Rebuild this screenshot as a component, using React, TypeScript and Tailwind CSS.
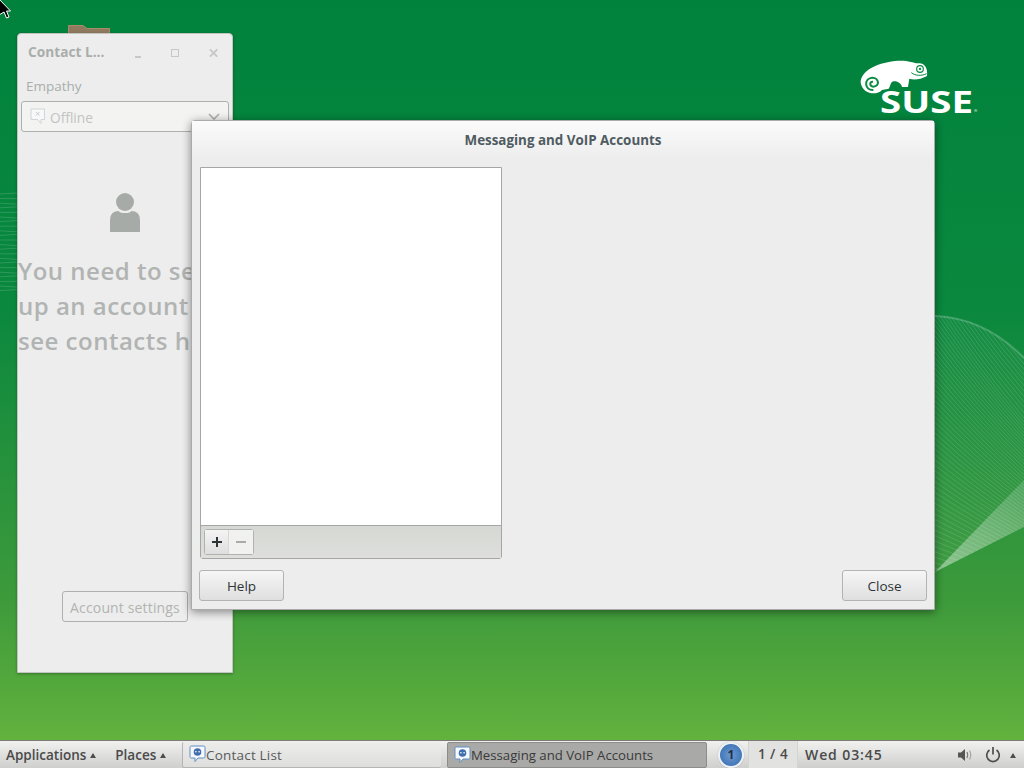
import React from 'react'

const FONT = "font-['Open_Sans','Noto_Sans',sans-serif]"

// family of fine lines for the right hand wave, clipped to its outline
function wavePaths() {
  const lines: string[] = []
  for (let y0 = 190; y0 < 572; y0 += 5.4) {
    const t = Math.min(1, Math.max(0, (y0 - 300) / 270))
    const slope = 1.45 - 1.15 * t
    const midY = y0 + slope * 45 * 1.05
    const endY = y0 + slope * 89 * 0.93
    lines.push(`M935 ${y0} Q980 ${midY} 1024 ${endY}`)
  }
  return lines
}

function leftWavePaths() {
  const left: string[] = []
  for (let i = 0; i < 22; i++) {
    const y = 194 + i * 4.6
    left.push(`M0 ${y} L17 ${y - 1 + (i % 3)}`)
  }
  return left
}

function Wallpaper() {
  return (
    <svg className="absolute inset-0" width={1024} height={768}>
      <defs>
        <clipPath id="wave-clip">
          <path d="M935 315 Q985 318 1024 358 L1024 527 L935 572 Z" />
        </clipPath>
        <linearGradient id="ribbon" x1="0" y1="1" x2="1" y2="0">
          <stop offset="0" stopColor="#ffffff" stopOpacity="0.42" />
          <stop offset="1" stopColor="#ffffff" stopOpacity="0.14" />
        </linearGradient>
      </defs>
      <path d="M935 315 Q985 318 1024 358 L1024 527 L935 572 Z" fill="#ffffff" fillOpacity="0.04" />
      <g clipPath="url(#wave-clip)">
        {wavePaths().map((d, i) => (
          <path key={i} d={d} fill="none" stroke="#ffffff" strokeOpacity="0.17" strokeWidth="0.8" />
        ))}
      </g>
      <path d="M935 316 Q985 318 1024 358" fill="none" stroke="#ffffff" strokeOpacity="0.2" strokeWidth="2" />
      <path d="M935 572 L1024 480 L1024 527 Z" fill="url(#ribbon)" />
      {leftWavePaths().map((d, i) => (
        <path key={i} d={d} fill="none" stroke="#ffffff" strokeOpacity="0.22" strokeWidth="0.7" />
      ))}
    </svg>
  )
}

function SuseLogo() {
  return (
    <div className="absolute left-[840px] top-[40px] h-[100px] w-[184px]">
      <svg className="absolute inset-0" width={184} height={100} viewBox="0 0 552 300">
        <path
          d="M62 128 C62 95 105 70 165 63 C200 59 218 68 232 70 C254 66 264 85 261 108 C240 120 220 120 208 116 L204 141 L186 141 C184 130 172 122 160 124 C150 128 152 138 146 146 L126 150 C112 166 70 166 62 128 Z"
          fill="#ffffff"
        />
        <path d="M100 150 C74 152 70 116 96 113 C118 112 120 140 100 140 C88 139 88 124 99 125" fill="none" stroke="#0b8a43" strokeWidth="6" />
        <circle cx="240" cy="87" r="10" fill="none" stroke="#0b8a43" strokeWidth="3.5" />
        <circle cx="240" cy="87" r="3.5" fill="#0b8a43" />
        <path d="M214 98 C226 108 246 108 260 101" fill="none" stroke="#0b8a43" strokeWidth="3" />
      </svg>
      <span className="absolute left-[40px] top-[42px] origin-left scale-x-[1.24] text-[31px] leading-[38px] font-bold text-white font-['Open_Sans',sans-serif]">
        SUSE
      </span>
      <span className="absolute left-[134px] top-[69px] text-[4px] leading-[4px] text-white">®</span>
    </div>
  )
}

function ChatFaceIcon() {
  return (
    <svg width="17" height="18" viewBox="0 0 17 18" className="shrink-0">
      <path d="M2.5 1 H14.5 Q16 1 16 2.5 V11.5 Q16 13 14.5 13 H9 L6 16.5 V13 H2.5 Q1 13 1 11.5 V2.5 Q1 1 2.5 1 Z" fill="#f6f8fb" stroke="#5f8fc4" />
      <circle cx="8.5" cy="7" r="3.8" fill="#3f6fae" />
      <rect x="6.2" y="6" width="1.4" height="1.4" fill="#e8eef6" />
      <rect x="9.4" y="6" width="1.4" height="1.4" fill="#e8eef6" />
    </svg>
  )
}

function UpArrow() {
  return <span className="mt-[2px] h-0 w-0 border-x-[3.5px] border-b-[5px] border-x-transparent border-b-[#4d4d4d]" />
}

function Taskbar() {
  return (
    <div className={`absolute bottom-0 left-0 flex h-[28px] w-[1024px] items-center border-t border-[#7b7b78] bg-gradient-to-b from-[#f1f1f0] to-[#cfcfcd] text-[13.5px] text-[#4a4a4a] ${FONT}`}>
      <div className="flex w-[182px] shrink-0 items-center pl-[6px] font-semibold">
        <span className="pt-[2px]">Applications</span>
        <span className="ml-[4px] mr-[19px] flex"><UpArrow /></span>
        <span className="pt-[2px]">Places</span>
        <span className="ml-[4px] flex"><UpArrow /></span>
      </div>
      <div className="flex h-[26px] w-[259px] shrink-0 items-center rounded-[2px] border-b border-l border-[#b5b5b3] bg-gradient-to-b from-[#ececeb] to-[#dededc] pl-[6px] text-[#5a5a5a]">
        <ChatFaceIcon />
        <span className="pt-[2px] tracking-[0.2px]">Contact List</span>
      </div>
      <div className="ml-[6px] flex h-[26px] w-[260px] shrink-0 items-center rounded-[2px] border border-[#8c8c8a] bg-[#a9a9a7] pl-[6px] text-[13.2px] text-[#3a3a3a]">
        <ChatFaceIcon />
        <span className="pt-[2px]">Messaging and VoIP Accounts</span>
      </div>
      <div className="ml-[11px] flex h-[26px] w-[26px] shrink-0 items-center justify-center rounded-full border-[2px] border-[#eef1f4] bg-[radial-gradient(circle,#6f9ad0,#2f68ae)] text-[12px] font-bold text-[#1f2f45] shadow-[0_0_1px_rgba(0,0,0,0.4)]">
        1
      </div>
      <div className="ml-[4px] flex h-[27px] w-[50px] shrink-0 items-center justify-center border-x border-[#d4d4d2] bg-[#e2e2e0] font-semibold tracking-[0.5px]">
        1 / 4
      </div>
      <span className="ml-[7px] w-[152px] shrink-0 text-[14px] font-semibold tracking-[0.9px]">Wed 03:45</span>
      <svg width="16" height="16" viewBox="0 0 16 16" className="shrink-0">
        <path d="M1 5.5 H4 L8 2 V14 L4 10.5 H1 Z" fill="#555555" />
        <path d="M10 5 Q11.5 8 10 11" fill="none" stroke="#777777" strokeWidth="1.2" />
        <path d="M12.5 3.5 Q15 8 12.5 12.5" fill="none" stroke="#a5a5a5" strokeWidth="1.2" />
      </svg>
      <svg width="16" height="17" viewBox="0 0 16 17" className="ml-[12px] shrink-0">
        <path d="M4.5 4 A6.3 6.3 0 1 0 11.5 4" fill="none" stroke="#4d4d4d" strokeWidth="1.7" />
        <path d="M8 1 V8.5" fill="none" stroke="#4d4d4d" strokeWidth="1.7" />
      </svg>
      <span className="ml-[9px] flex"><UpArrow /></span>
    </div>
  )
}

function ContactListWindow() {
  return (
    <div className={`absolute left-[17px] top-[33px] flex h-[640px] w-[216px] flex-col rounded-t-[4px] border border-[#c2c4c2] bg-[#ededed] shadow-[0_1px_3px_rgba(0,0,0,0.3)] ${FONT}`}>
      <div className="flex h-[38px] shrink-0 items-center pb-[1px] pl-[10px] pr-[14px] text-[13.7px] font-bold text-[#a9adab]">
        <span className="w-[108px]">Contact L...</span>
        <span className="ml-[7px] mt-[9px] h-[1.5px] w-[7px] bg-[#c6c8c6]" />
        <span className="ml-[30px] h-[8px] w-[8px] border-[1.5px] border-[#c6c8c6]" />
        <svg width="10" height="10" viewBox="0 0 10 10" className="ml-[30px]">
          <path d="M1 1 L9 9 M9 1 L1 9" stroke="#c6c8c6" strokeWidth="2" />
        </svg>
      </div>
      <div className="mt-[4px] pl-[8px] text-[13.5px] leading-[20px] text-[#a9adab]">Empathy</div>
      <div className="mx-[3px] mt-[5px] flex h-[31px] shrink-0 items-center rounded-[3px] border border-[#aeb0ae] bg-[#f3f3f2] pl-[8px] pr-[8px] text-[13.7px] text-[#c2c4c2]">
        <svg width="16" height="17" viewBox="0 0 16 17" className="shrink-0">
          <path d="M1 1 H14.5 V11.5 H11 V15.5 L7.5 11.5 H1 Z" fill="#f8f8f8" stroke="#cfd5d8" />
          <path d="M6 4 L9.5 7.5 M9.5 4 L6 7.5" stroke="#c6cbcd" />
        </svg>
        <span className="ml-[4px] pt-[3px]">Offline</span>
        <svg width="12" height="8" viewBox="0 0 12 8" className="ml-auto">
          <path d="M1 1 L6 6 L11 1" fill="none" stroke="#aeb0ae" strokeWidth="1.6" />
        </svg>
      </div>
      <svg width="30" height="40" viewBox="0 0 30 40" className="ml-[92px] mt-[61px] shrink-0">
        <circle cx="15" cy="9" r="9" fill="#a7aba8" />
        <path d="M0 39 V27 Q0 18 9 18 Q9 20 15 20 Q21 20 21 18 Q30 18 30 27 V39 Z" fill="#a7aba8" />
      </svg>
      <div className="mt-[20px] whitespace-nowrap text-[24px] font-semibold leading-[35px] tracking-[0.5px] text-[#b1b4b2]">
        <div>You need to set</div>
        <div>up an account to</div>
        <div>see contacts here</div>
      </div>
      <div className="mb-[50px] ml-[44px] mt-auto flex h-[31px] w-[126px] items-center justify-center rounded-[3px] border border-[#aeb0ae] pt-[1px] text-[14px] tracking-[0.15px] text-[#b1b4b2]">
        Account settings
      </div>
    </div>
  )
}

function DialogButton({ label }: { label: string }) {
  return (
    <div className="flex h-[31px] w-[85px] items-center justify-center rounded-[3px] border border-[#b2b4b2] bg-gradient-to-b from-[#f6f6f6] to-[#dfdfdf] pt-[2px] text-[13.5px] text-[#2e3436]">
      {label}
    </div>
  )
}

function AccountsDialog() {
  return (
    <div className={`absolute left-[191px] top-[120px] flex h-[490px] w-[744px] flex-col rounded-t-[4px] border border-[#a9aaa9] bg-[#ededed] shadow-[0_2px_10px_rgba(0,0,0,0.45)] ${FONT}`}>
      <div className="flex h-[38px] shrink-0 items-center justify-center bg-gradient-to-b from-[#fbfbfb] to-[#ededed] text-[13.4px] font-bold text-[#4f5b61]">
        Messaging and VoIP Accounts
      </div>
      <div className="ml-[8px] mt-[8px] flex h-[392px] w-[302px] shrink-0 flex-col rounded-b-[3px] border border-[#a5a7a5]">
        <div className="flex-1 bg-white" />
        <div className="flex h-[33px] shrink-0 items-start border-t border-[#a5a7a5] bg-gradient-to-b from-[#d6d8d4] to-[#dedfdc] pl-[3px] pt-[3px]">
          <div className="flex h-[26px] w-[50px] rounded-[3px] border border-[#b0b2b0]">
            <div className="flex w-[24px] items-center justify-center border-r border-[#d8d8d8] bg-gradient-to-b from-[#f4f4f4] to-[#dedede]">
              <svg width="12" height="12" viewBox="0 0 12 12">
                <path d="M6 1 V11 M1 6 H11" stroke="#2e3436" strokeWidth="2" />
              </svg>
            </div>
            <div className="flex flex-1 items-center justify-center bg-[#f1f1f0]">
              <svg width="12" height="12" viewBox="0 0 12 12">
                <path d="M1 6 H11" stroke="#a9abaa" strokeWidth="2" />
              </svg>
            </div>
          </div>
        </div>
      </div>
      <div className="mt-[11px] flex justify-between pl-[7px] pr-[7px]">
        <DialogButton label="Help" />
        <DialogButton label="Close" />
      </div>
    </div>
  )
}

export default function App() {
  return (
    <div className="relative h-[768px] w-[1024px] overflow-hidden bg-[linear-gradient(to_bottom,#00823d_0%,#0a883e_40%,#3d9a3b_78%,#6ab73e_100%)]">
      <Wallpaper />
      <SuseLogo />
      <svg width="42" height="10" viewBox="0 0 42 10" className="absolute left-[68px] top-[25px]">
        <path d="M0.5 10 V0.5 H15 L19 3.5 H41.5 V10 Z" fill="#8f7a5f" stroke="#a88c68" />
      </svg>
      <ContactListWindow />
      <AccountsDialog />
      <Taskbar />
      <svg width="12" height="19" viewBox="0 0 12 19" className="absolute left-0 top-0">
        <path d="M-1 -1 L10.5 11 H6.5 L9 17 L6.5 18 L4 12 L-1 15 Z" fill="#000000" stroke="#ffffff" strokeWidth="1" />
      </svg>
    </div>
  )
}
